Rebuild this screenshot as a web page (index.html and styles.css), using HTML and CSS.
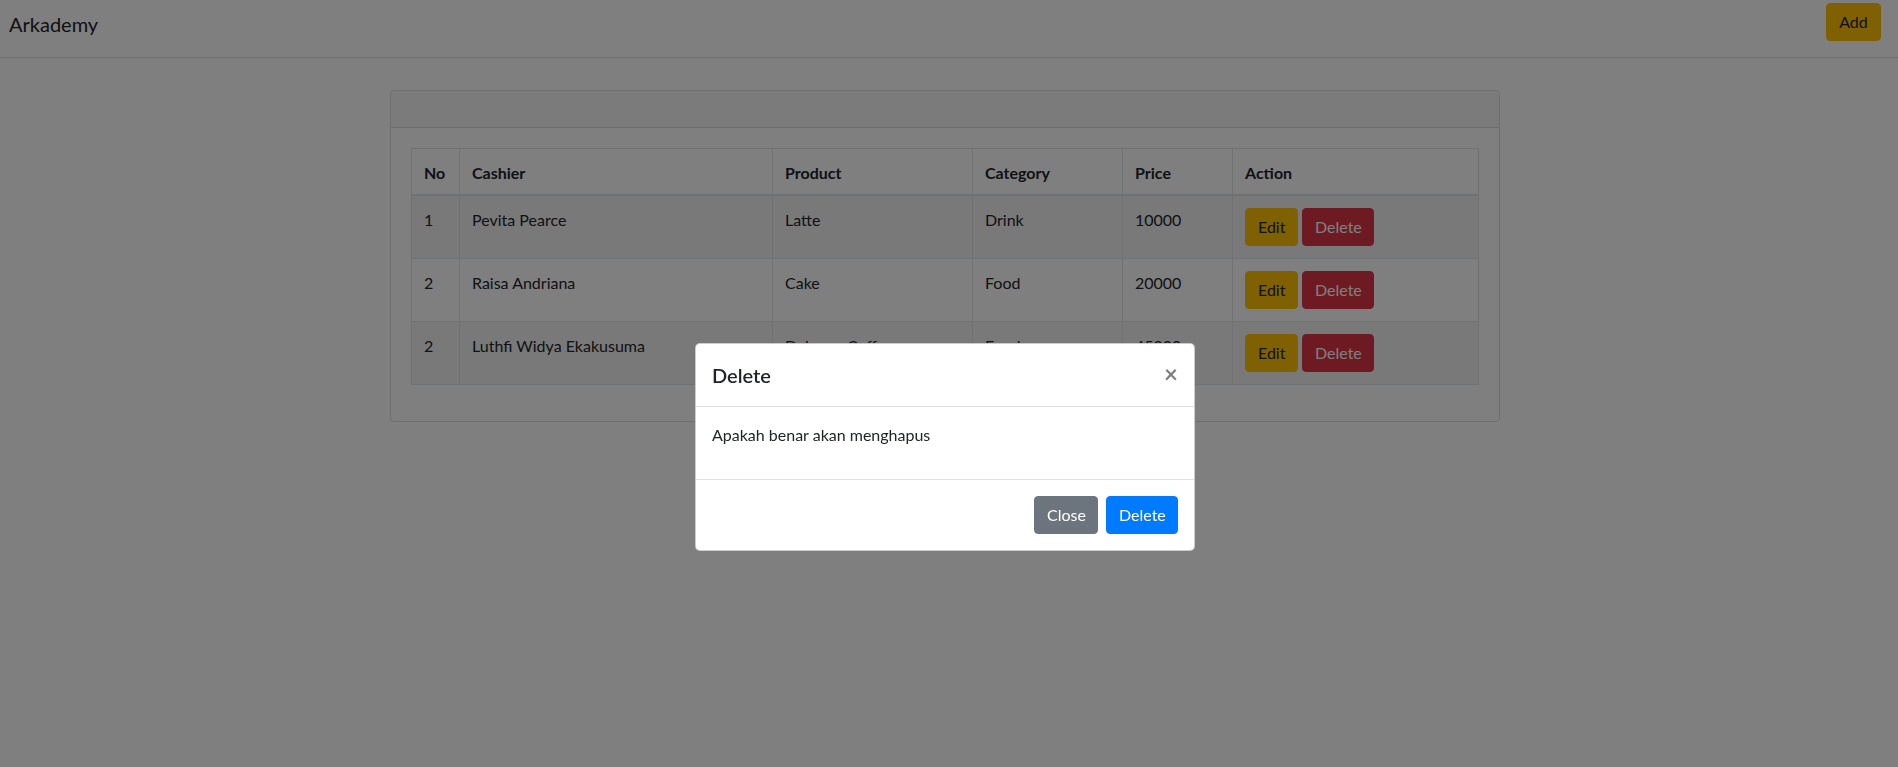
FILE: index.html
```html
<!DOCTYPE html>
<html lang="id">
<head>
<meta charset="utf-8">
<title>Arkademy</title>
<link rel="stylesheet" href="styles.css">
</head>
<body>
<nav class="navbar">
  <span class="brand">Arkademy</span>
  <button class="btn btn-warning btn-add">Add</button>
</nav>

<main class="page">
  <div class="container">
    <div class="card">
      <div class="card-header"></div>
      <div class="card-body">
        <table class="table">
          <colgroup>
            <col class="c-no"><col class="c-cashier"><col class="c-product"><col class="c-category"><col class="c-price"><col class="c-action">
          </colgroup>
          <thead>
            <tr><th>No</th><th>Cashier</th><th>Product</th><th>Category</th><th>Price</th><th>Action</th></tr>
          </thead>
          <tbody>
            <tr class="odd">
              <td>1</td><td>Pevita Pearce</td><td>Latte</td><td>Drink</td><td>10000</td>
              <td><div class="actions"><button class="btn btn-warning">Edit</button><button class="btn btn-danger">Delete</button></div></td>
            </tr>
            <tr>
              <td>2</td><td>Raisa Andriana</td><td>Cake</td><td>Food</td><td>20000</td>
              <td><div class="actions"><button class="btn btn-warning">Edit</button><button class="btn btn-danger">Delete</button></div></td>
            </tr>
            <tr class="odd">
              <td>2</td><td>Luthfi Widya Ekakusuma</td><td>Dalgona Coffe</td><td>Food</td><td>45000</td>
              <td><div class="actions"><button class="btn btn-warning">Edit</button><button class="btn btn-danger">Delete</button></div></td>
            </tr>
          </tbody>
        </table>
      </div>
    </div>
  </div>
</main>

<div class="backdrop"></div>

<div class="modal-wrap">
  <div class="modal">
    <div class="modal-header">
      <h5 class="modal-title">Delete</h5>
      <button class="close" aria-label="Close">&times;</button>
    </div>
    <div class="modal-body">
      <p>Apakah benar akan menghapus</p>
    </div>
    <div class="modal-footer">
      <button class="btn btn-secondary">Close</button>
      <button class="btn btn-primary">Delete</button>
    </div>
  </div>
</div>
</body>
</html>
```

FILE: styles.css
```css
* { box-sizing: border-box; }

html, body {
  margin: 0;
  padding: 0;
}

body {
  font-family: "Lato", "Liberation Sans", sans-serif;
  font-size: 16px;
  line-height: 1.5;
  color: #212529;
  background: #fff;
  height: 767px;
  overflow: hidden;
}

/* Navbar */
.navbar {
  display: flex;
  justify-content: space-between;
  align-items: flex-start;
  height: 58px;
  padding: 0 17px 0 9px;
  border-bottom: 1px solid #dcdcdc;
}

.brand {
  font-size: 20px;
  line-height: 30px;
  margin-top: 9px;
  color: #212529;
}

.btn-add {
  margin-top: 3px;
  width: 55px;
}

/* Buttons */
.btn {
  display: inline-block;
  font-family: inherit;
  font-size: 16px;
  line-height: 24px;
  font-weight: 400;
  padding: 6px 12px;
  border: 1px solid transparent;
  border-radius: 4px;
  cursor: pointer;
  text-align: center;
}

.btn-warning { background: #ffc107; border-color: #ffc107; color: #212529; }
.btn-danger { background: #dc3545; border-color: #dc3545; color: #fff; }
.btn-secondary { background: #6c757d; border-color: #6c757d; color: #fff; }
.btn-primary { background: #007bff; border-color: #007bff; color: #fff; }

.actions .btn-warning { width: 53px; }
.actions .btn-danger { width: 72px; }

/* Page */
.page {
  padding-right: 8px;
}

.container {
  max-width: 1140px;
  margin: 32px auto 0;
  padding: 0 15px;
}

.card {
  border: 1px solid rgba(0, 0, 0, 0.125);
  border-radius: 4px;
  background: #fff;
}

.card-header {
  height: 37px;
  background: rgba(0, 0, 0, 0.03);
  border-bottom: 1px solid rgba(0, 0, 0, 0.125);
  border-radius: 3px 3px 0 0;
}

.card-body {
  padding: 20px;
}

/* Table */
.table {
  width: 100%;
  border-collapse: collapse;
  table-layout: fixed;
  margin-bottom: 16px;
}

.c-no { width: 48px; }
.c-cashier { width: 313px; }
.c-product { width: 200px; }
.c-category { width: 150px; }
.c-price { width: 110px; }

.table th,
.table td {
  border: 1px solid #dee2e6;
  padding: 12px;
  text-align: left;
  vertical-align: top;
  white-space: nowrap;
}

.table th {
  font-weight: 700;
  padding-bottom: 9px;
  border-bottom: 2px solid #dee2e6;
}

.table tr.odd td {
  background: rgba(0, 0, 0, 0.05);
}

.actions {
  display: flex;
  gap: 4px;
}

/* Backdrop & modal */
.backdrop {
  position: fixed;
  inset: 0;
  background: rgba(0, 0, 0, 0.5);
}

.modal-wrap {
  position: fixed;
  inset: 0;
  display: flex;
  justify-content: center;
  align-items: flex-start;
  padding: 343px 8px 0 0;
}

.modal {
  width: 500px;
  background: #fff;
  border: 1px solid rgba(0, 0, 0, 0.2);
  border-radius: 5px;
}

.modal-header {
  display: flex;
  justify-content: space-between;
  align-items: flex-start;
  padding: 16px;
  border-bottom: 1px solid #dee2e6;
}

.modal-title {
  margin: 0;
  font-size: 20px;
  line-height: 30px;
  font-weight: 600;
}

.close {
  background: transparent;
  border: 0;
  padding: 16px;
  margin: -14px -16px -16px auto;
  font-family: inherit;
  font-size: 24px;
  line-height: 1;
  font-weight: 700;
  color: #000;
  opacity: 0.5;
}

.modal-body {
  padding: 16px;
}

.modal-body p {
  margin: 0 0 16px;
}

.modal-footer {
  display: flex;
  justify-content: flex-end;
  align-items: center;
  padding: 12px;
  border-top: 1px solid #dee2e6;
}

.modal-footer .btn {
  margin: 4px;
}

.modal-footer .btn-secondary { width: 64px; }
.modal-footer .btn-primary { width: 72px; }
```
